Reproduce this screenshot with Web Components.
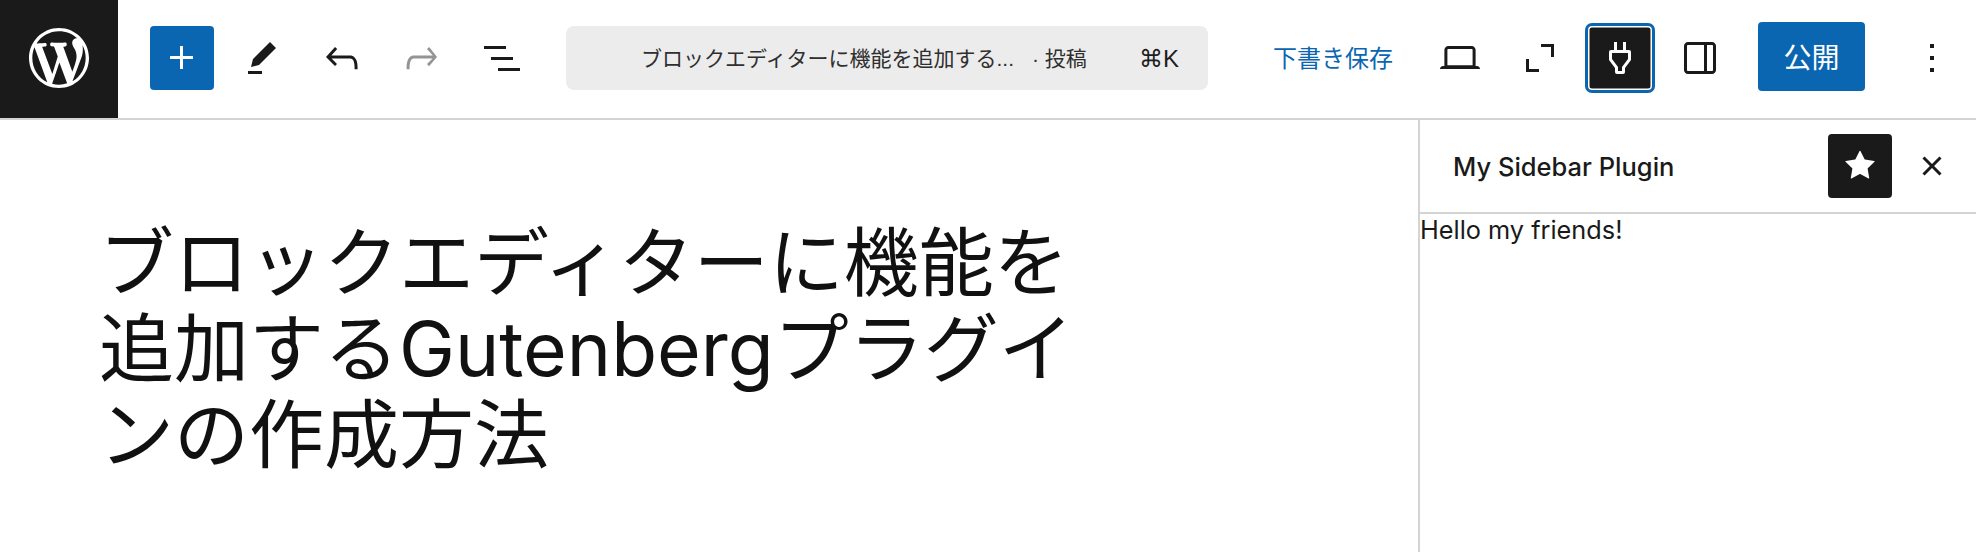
<!DOCTYPE html>
<html lang="ja">
<head>
<meta charset="utf-8">
<title>Editor</title>
<style>
  html, body { margin: 0; padding: 0; background: #fff; height: 100%; overflow: hidden; }
  body { font-family: "Liberation Sans", "Noto Sans CJK JP", sans-serif; color: #1e1e1e; }
</style>
</head>
<body>
<wp-editor>
  <wp-header slot="header"></wp-header>
  <wp-title slot="canvas">ブロックエディターに機能を追加するGutenbergプラグインの作成方法</wp-title>
  <wp-sidebar slot="sidebar" heading="My Sidebar Plugin">Hello my friends!</wp-sidebar>
</wp-editor>

<script>
const ICONS = {
  plus: "M11 12.5V17.5H12.5V12.5H17.5V11H12.5V6H11V11H6V12.5H11Z",
  pencil: "m19 7-3-3-8.5 8.5-1 4 4-1L19 7Zm-7 11.5H5V20h7v-1.5Z",
  undo: "M18.3 11.7c-.6-.6-1.4-.9-2.3-.9H6.7l2.9-3.3-1.1-1-4.5 5L8.5 16l1-1-2.7-2.7H16c.5 0 .9.2 1.3.5 1 1 1 3.4 1 4.5v.3h1.5v-.2c0-1.500 0-4.300-1.500-5.700z",
  redo: "M15.6 6.5l-1.1 1 2.9 3.3H8c-.9 0-1.700.3-2.300.9-1.400 1.500-1.400 4.200-1.400 5.700v.2h1.500v-.3c0-1.100 0-3.500 1-4.500.3-.3.7-.5 1.300-.5h9.200L14.500 15l1 1.100 4-4.600-3.900-5z",
  list: "M3 6h11v1.500H3V6Zm3.500 5.500h11V13h-11v-1.500ZM21 17H10v1.500h11V17Z",
  laptop: "M20.500 16h-.7V8c0-1.100-.9-2-2-2H6.200c-1.100 0-2 .9-2 2v8h-.7c-.8 0-1.500.7-1.500 1.500h20c0-.8-.7-1.500-1.500-1.500zM5.700 8c0-.3.2-.5.5-.5h11.600c.3 0 .5.2.5.5v7.600H5.700V8z",
  fullscreen: "M12.500 5H19V11.500H17.500V6.500H12.500ZM5 12.500H6.500V17.500H11.500V19H5Z",
  plug: "M10.500 4v4h3V4H15v4h1.500a1 1 0 0 1 1 1v4l-3 4v2a1 1 0 0 1-1 1h-3a1 1 0 0 1-1-1v-2l-3-4V9a1 1 0 0 1 1-1H9V4h1.500zm.5 12.500v2h2v-2l3-4v-3H8v3l3 4z",
  panel: "M18 4H6c-1.100 0-2 .9-2 2v12c0 1.100.9 2 2 2h12c1.100 0 2-.9 2-2V6c0-1.100-.9-2-2-2zm-4 14.500H6c-.3 0-.5-.2-.5-.5V6c0-.3.2-.5.5-.5h8v13zm4.500-.5c0 .3-.2.5-.5.5h-2.500v-13H18c.3 0 .5.2.5.5v12z",
  more: "M13 19h-2v-2h2v2zm0-6h-2v-2h2v2zm0-6h-2V5h2v2z",
  star: "M11.776 4.454a.25.25 0 0 1 .448 0l2.069 4.192a.25.25 0 0 0 .188.137l4.626.672a.25.25 0 0 1 .139.426l-3.348 3.263a.25.25 0 0 0-.072.222l.79 4.607a.25.25 0 0 1-.362.263l-4.138-2.175a.25.25 0 0 0-.232 0l-4.138 2.175a.25.25 0 0 1-.363-.263l.79-4.607a.25.25 0 0 0-.071-.222L4.754 9.881a.25.25 0 0 1 .139-.426l4.626-.672a.25.25 0 0 0 .188-.137l2.069-4.192Z",
  close: "M12 13.060l3.712 3.713 1.061-1.060L13.061 12l3.712-3.712-1.060-1.060L12 10.938 8.288 7.227l-1.061 1.060L10.939 12l-3.712 3.712 1.060 1.061L12 13.061z"
};

const WP_LOGO = "M20 10c0-5.510-4.490-10-10-10C4.480 0 0 4.490 0 10c0 5.520 4.480 10 10 10 5.510 0 10-4.480 10-10zM7.780 15.370L4.370 6.220c.55-.02 1.170-.08 1.170-.08.5-.06.44-1.130-.06-1.110 0 0-1.450.11-2.370.11-.18 0-.37 0-.58-.01C4.120 2.690 6.870 1.110 10 1.110c2.330 0 4.450.87 6.050 2.340-.68-.11-1.650.39-1.650 1.580 0 .74.45 1.360.9 2.100.35.61.55 1.360.55 2.460 0 1.490-1.400 5-1.400 5l-3.030-8.370c.54-.02.82-.17.82-.17.5-.05.44-1.250-.06-1.220 0 0-1.440.12-2.380.12-.87 0-2.330-.12-2.330-.12-.5-.03-.56 1.200-.06 1.220l.92.08 1.260 3.410zM17.410 10c.24-.64.74-1.870.43-4.250.7 1.290 1.050 2.710 1.050 4.250 0 3.290-1.730 6.240-4.400 7.780.97-2.590 1.940-5.200 2.920-7.780zM6.100 18.090C3.120 16.650 1.110 13.530 1.110 10c0-1.300.23-2.480.72-3.590C3.250 10.300 4.670 14.200 6.100 18.090zm4.030-6.630l2.580 6.980c-.86.29-1.760.45-2.710.45-.79 0-1.570-.11-2.290-.33.81-2.380 1.620-4.740 2.420-7.100z";

// button with one icon, variant picks the colours
class WpIconBtn extends HTMLElement {
  connectedCallback() {
    const d = ICONS[this.getAttribute("icon")];
    this.attachShadow({ mode: "open" }).innerHTML = `
      <style>
        :host { display: flex; flex: none; width: 64px; height: 64px; align-items: center; justify-content: center; border-radius: 4px; color: #1a1a1a; }
        :host([variant="primary"]) { background: #0b66b2; color: #fff; }
        :host([variant="dark"]) { background: #1a1a1a; color: #fff; }
        :host([variant="focus"]) { background: #1a1a1a; color: #fff; box-shadow: 0 0 0 3px #0b66b2, inset 0 0 0 1.5px #fff; }
        :host([variant="off"]) { color: #949494; }
        svg { width: 48px; height: 48px; fill: currentColor; display: block; }
      </style>
      <svg viewBox="0 0 24 24"><path d="${d}"/></svg>`;
  }
}

class WpHeader extends HTMLElement {
  connectedCallback() {
    this.attachShadow({ mode: "open" }).innerHTML = `
      <style>
        :host { display: flex; box-sizing: border-box; height: 120px; padding-bottom: 2px; border-bottom: 2px solid #d4d4d4; align-items: center; background: #fff; }
        .logo { width: 118px; height: 118px; margin-bottom: -2px; padding-bottom: 2px; box-sizing: border-box; background: #1a1a1a; display: flex; align-items: center; justify-content: center; flex: none; }
        .logo svg { width: 60px; height: 60px; fill: #fff; display: block; }
        .tools { display: flex; gap: 16px; margin-left: 32px; flex: none; }
        .search { display: flex; align-items: center; flex: none; box-sizing: border-box; width: 642px; height: 64px; margin-left: 32px; padding: 0 29px 2px 75px; background: #ececec; border-radius: 8px; font-size: 21px; color: #2f2f2f; }
        .type { margin-left: 18px; }
        kbd { font-family: "Liberation Sans", "DejaVu Sans", sans-serif; font-size: 24px; margin: 4px 0 0 auto; color: #1e1e1e; }
        .right { display: flex; align-items: center; flex: 1; justify-content: flex-end; gap: 16px; padding-right: 12px; }
        .save { font-size: 24px; color: #0b66b2; margin: 0 19px 3px 0; white-space: nowrap; }
        .publish { display: flex; align-items: center; justify-content: center; box-sizing: border-box; width: 107px; height: 69px; margin: -4px 19px 0 10px; padding-bottom: 1px; background: #0b66b2; color: #fff; border-radius: 4px; font-size: 28px; }
      </style>
      <div class="logo"><svg viewBox="0 0 20 20"><path d="${WP_LOGO}"/></svg></div>
      <div class="tools">
        <wp-icon-btn icon="plus" variant="primary"></wp-icon-btn>
        <wp-icon-btn icon="pencil"></wp-icon-btn>
        <wp-icon-btn icon="undo"></wp-icon-btn>
        <wp-icon-btn icon="redo" variant="off"></wp-icon-btn>
        <wp-icon-btn icon="list"></wp-icon-btn>
      </div>
      <div class="search">
        <span>ブロックエディターに機能を追加する...</span>
        <span class="type">· 投稿</span>
        <kbd>⌘K</kbd>
      </div>
      <div class="right">
        <span class="save">下書き保存</span>
        <wp-icon-btn icon="laptop"></wp-icon-btn>
        <wp-icon-btn icon="fullscreen"></wp-icon-btn>
        <wp-icon-btn icon="plug" variant="focus"></wp-icon-btn>
        <wp-icon-btn icon="panel"></wp-icon-btn>
        <div class="publish">公開</div>
        <wp-icon-btn icon="more"></wp-icon-btn>
      </div>`;
  }
}

class WpTitle extends HTMLElement {
  constructor() {
    super();
    this.attachShadow({ mode: "open" }).innerHTML = `
      <style>
        :host { display: block; padding: 100px 0 0 99px; }
        h1 { margin: 0; width: 1000px; font-family: Inter, "Noto Sans CJK JP", sans-serif; font-size: 75px; line-height: 86px; font-weight: 400; color: #111; }
      </style>
      <h1><slot></slot></h1>`;
  }
}

class WpSidebar extends HTMLElement {
  connectedCallback() {
    this.attachShadow({ mode: "open" }).innerHTML = `
      <style>
        :host { display: block; height: 100%; border-left: 2px solid #d4d4d4; }
        header { display: flex; align-items: center; height: 94px; box-sizing: border-box; border-bottom: 2px solid #d4d4d4; padding: 0 12px 0 33px; gap: 8px; }
        h2 { margin: 0 auto 0 0; font-family: Inter, "Liberation Sans", sans-serif; font-size: 25.5px; font-weight: 500; color: #1a1a1a; }
        .body { font-family: Inter, "Liberation Sans", sans-serif; font-size: 25.3px; line-height: 32px; color: #1a1a1a; }
      </style>
      <header>
        <h2>${this.getAttribute("heading")}</h2>
        <wp-icon-btn icon="star" variant="dark"></wp-icon-btn>
        <wp-icon-btn icon="close"></wp-icon-btn>
      </header>
      <div class="body"><slot></slot></div>`;
  }
}

class WpEditor extends HTMLElement {
  constructor() {
    super();
    this.attachShadow({ mode: "open" }).innerHTML = `
      <style>
        :host { display: flex; flex-direction: column; height: 552px; }
        .main { display: flex; flex: 1; min-height: 0; }
        .canvas { flex: 1; }
        .side { width: 558px; flex: none; }
      </style>
      <slot name="header"></slot>
      <div class="main">
        <div class="canvas"><slot name="canvas"></slot></div>
        <div class="side"><slot name="sidebar"></slot></div>
      </div>`;
  }
}

customElements.define("wp-icon-btn", WpIconBtn);
customElements.define("wp-header", WpHeader);
customElements.define("wp-title", WpTitle);
customElements.define("wp-sidebar", WpSidebar);
customElements.define("wp-editor", WpEditor);
</script>
</body>
</html>
